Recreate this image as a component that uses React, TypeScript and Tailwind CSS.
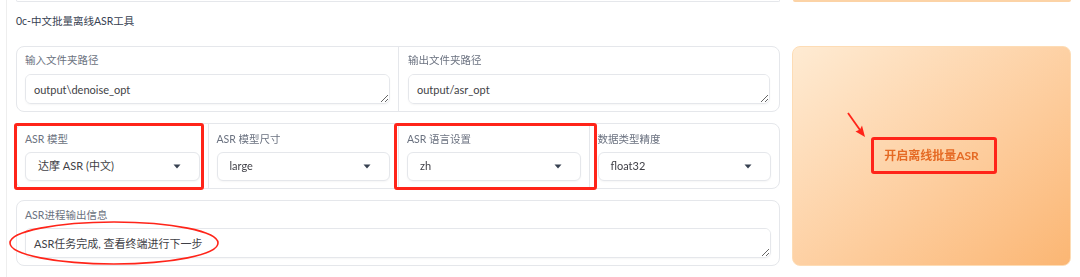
import React from "react";

const FONT = { fontFamily: 'Lato, "Noto Sans CJK SC", "Noto Sans", sans-serif' };

function Caret() {
  return (
    <svg width="8" height="5" viewBox="0 0 8 5" className="shrink-0">
      <path d="M0.5 0.5 H7.5 L4 4.5 Z" fill="#374151" />
    </svg>
  );
}

function TextBox({ value }: { value: string }) {
  return (
    <textarea
      readOnly
      defaultValue={value}
      rows={1}
      className="mt-[6px] block h-[30px] w-full rounded-md border border-[#e5e7eb] bg-white px-[8px] py-[6px] text-[11px] leading-[18px] text-[#3f3f46] shadow-[0_1px_2px_rgba(0,0,0,0.04)] outline-none"
    />
  );
}

function SelectBox({ value }: { value: string }) {
  return (
    <div className="mt-[5px] flex h-[29px] items-center justify-between rounded-md border border-[#e5e7eb] bg-white pl-[12px] pr-[18px] text-[11px] text-[#3f3f46] shadow-[0_1px_2px_rgba(0,0,0,0.04)]">
      <span>{value}</span>
      <Caret />
    </div>
  );
}

function Label({ children }: { children: React.ReactNode }) {
  return <div className="h-[16px] text-[10.5px] leading-[16px] text-[#6b7280]">{children}</div>;
}

export default function App() {
  const selects = [
    { label: "ASR 模型", value: "达摩 ASR (中文)" },
    { label: "ASR 模型尺寸", value: "large" },
    { label: "ASR 语言设置", value: "zh" },
    { label: "数据类型精度", value: "float32" },
  ];

  return (
    <div className="relative h-[277px] w-[1080px] overflow-hidden bg-white" style={FONT}>
      <div className="ml-[6px] h-full border-l border-[#eeeeee] pl-[9px]">
        {/* tail of the previous section */}
        <div className="flex h-[2px] gap-[13px]">
          <div className="h-[2px] w-[764px] rounded-b-md border-x border-b border-[#e5e7eb]" />
          <div className="h-[2px] w-[278px] rounded-b-md bg-[#fcd3a6]" />
        </div>

        <div className="h-[44px] pt-[11px] text-[10.5px] leading-[16px] text-[#374151]">
          0c-中文批量离线ASR工具
        </div>

        <div className="flex gap-[12px]">
          <div className="flex w-[764px] flex-col gap-[11px]">
            <div className="grid grid-cols-2 rounded-lg border border-[#e5e7eb] bg-white">
              <div className="px-[8px] pb-[7px] pt-[5px]">
                <Label>输入文件夹路径</Label>
                <TextBox value="output\denoise_opt" />
              </div>
              <div className="border-l border-[#e5e7eb] px-[9px] pb-[7px] pt-[5px]">
                <Label>输出文件夹路径</Label>
                <TextBox value="output/asr_opt" />
              </div>
            </div>

            <div className="grid grid-cols-4 rounded-lg border border-[#e5e7eb] bg-white">
              {selects.map((s, i) => (
                <div
                  key={s.label}
                  className={`px-[8px] pb-[7px] pt-[7px] ${i > 0 ? "border-l border-[#e5e7eb]" : ""}`}
                >
                  <Label>{s.label}</Label>
                  <SelectBox value={s.value} />
                </div>
              ))}
            </div>

            <div className="rounded-lg border border-[#e5e7eb] bg-white px-[8px] pb-[7px] pt-[6px]">
              <Label>ASR进程输出信息</Label>
              <div className="mt-[-1px]">
                <TextBox value="ASR任务完成, 查看终端进行下一步" />
              </div>
            </div>
          </div>

          <button className="flex h-[220px] w-[279px] items-center justify-center rounded-lg border border-[#fddcb5] bg-linear-to-br from-[#feebd3] to-[#fbb673] text-[12px] font-bold text-[#e56a24]">
            开启离线批量ASR
          </button>
        </div>
      </div>

      {/* annotations */}
      <div className="pointer-events-none absolute left-[14px] top-[123px] h-[67px] w-[190px] rounded-[3px] border-[3px] border-[#ff2419]" />
      <div className="pointer-events-none absolute left-[394px] top-[123px] h-[67px] w-[203px] rounded-[3px] border-[3px] border-[#ff2419]" />
      <div className="pointer-events-none absolute left-[871px] top-[137px] h-[37px] w-[126px] rounded-[3px] border-[3px] border-[#ff2419]" />
      <svg className="pointer-events-none absolute left-0 top-[215px]" width="240" height="60">
        <ellipse cx="114" cy="28" rx="104" ry="21" fill="none" stroke="#ff2419" strokeWidth="1.6" />
      </svg>
      <svg className="pointer-events-none absolute left-[840px] top-[105px]" width="40" height="40">
        <line x1="8" y1="8" x2="20" y2="25" stroke="#ff2419" strokeWidth="1.8" />
        <path d="M25 32 L15.5 26.5 L20 24.5 L22 20.5 Z" fill="#ff2419" />
      </svg>
    </div>
  );
}
